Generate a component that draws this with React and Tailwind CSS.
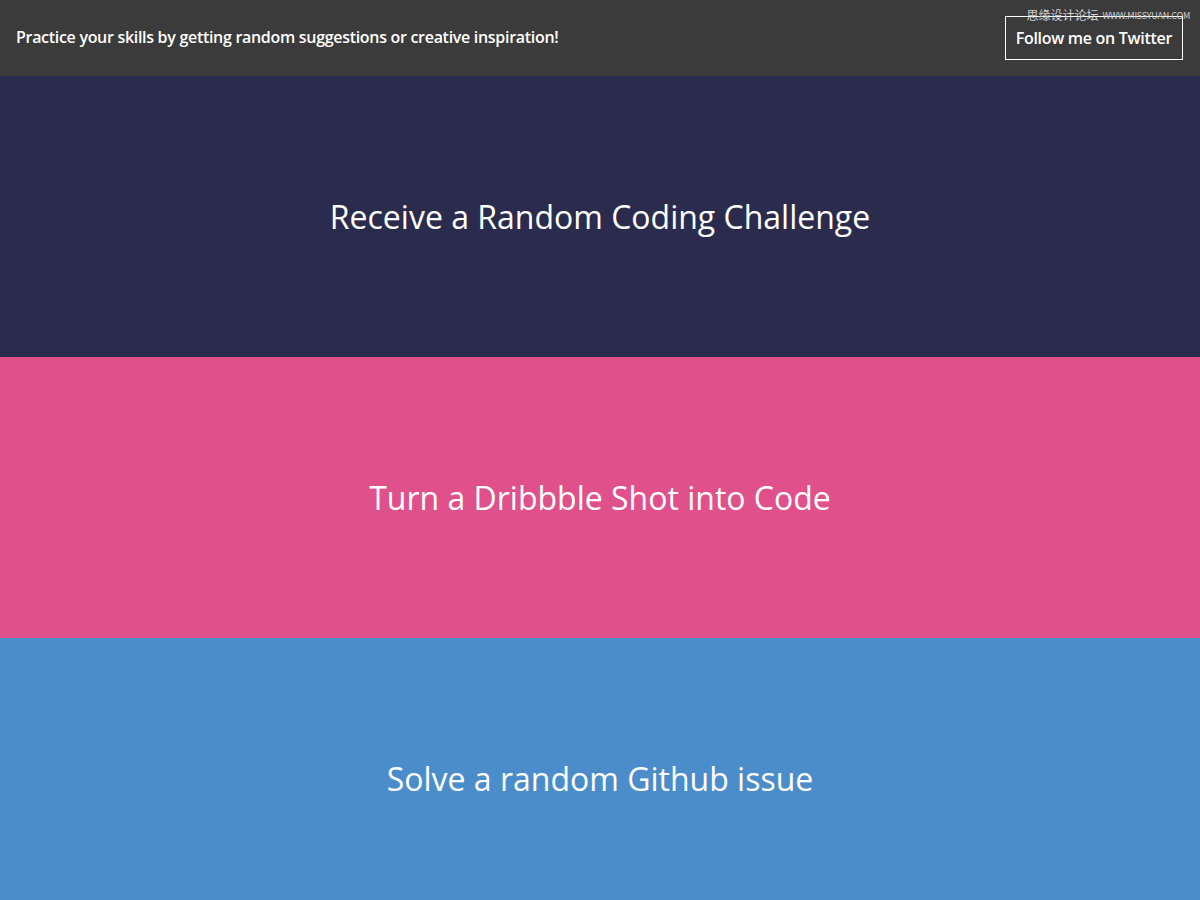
export default function App() {
  const font = { fontFamily: '"Open Sans", "Noto Sans CJK SC", sans-serif' };
  return (
    <div className="relative w-full h-[900px] overflow-hidden" style={font}>
      <header className="h-[76px] bg-[#3b3b3b] flex items-center justify-between pl-4 pr-[17px]">
        <p className="text-white text-[16px] font-semibold tracking-[-0.3px] -mt-[2px]">Practice your skills by getting random suggestions or creative inspiration!</p>
        <a className="h-[44px] border border-white text-white text-[16px] font-semibold tracking-[-0.3px] px-[10px] flex items-center">Follow me on Twitter</a>
      </header>
      <section className="h-[281px] bg-[#2b2c4d] flex items-center justify-center">
        <h2 className="text-white text-[32px]">Receive a Random Coding Challenge</h2>
      </section>
      <section className="h-[281px] bg-[#e0508a] flex items-center justify-center">
        <h2 className="text-white text-[32px]">Turn a Dribbble Shot into Code</h2>
      </section>
      <section className="h-[281px] bg-[#4a8dca] flex items-center justify-center">
        <h2 className="text-white text-[32px]">Solve a random Github issue</h2>
      </section>
      <div className="absolute top-[9px] right-[10px] flex items-center gap-1 text-[#cfcfcf] text-[11px] leading-none" style={{ fontFamily: '"Noto Sans CJK SC", sans-serif' }}>
        <span className="text-[12px]">思缘设计论坛</span>
        <span className="tracking-tight text-[9px]">WWW.MISSYUAN.COM</span>
      </div>
    </div>
  );
}
